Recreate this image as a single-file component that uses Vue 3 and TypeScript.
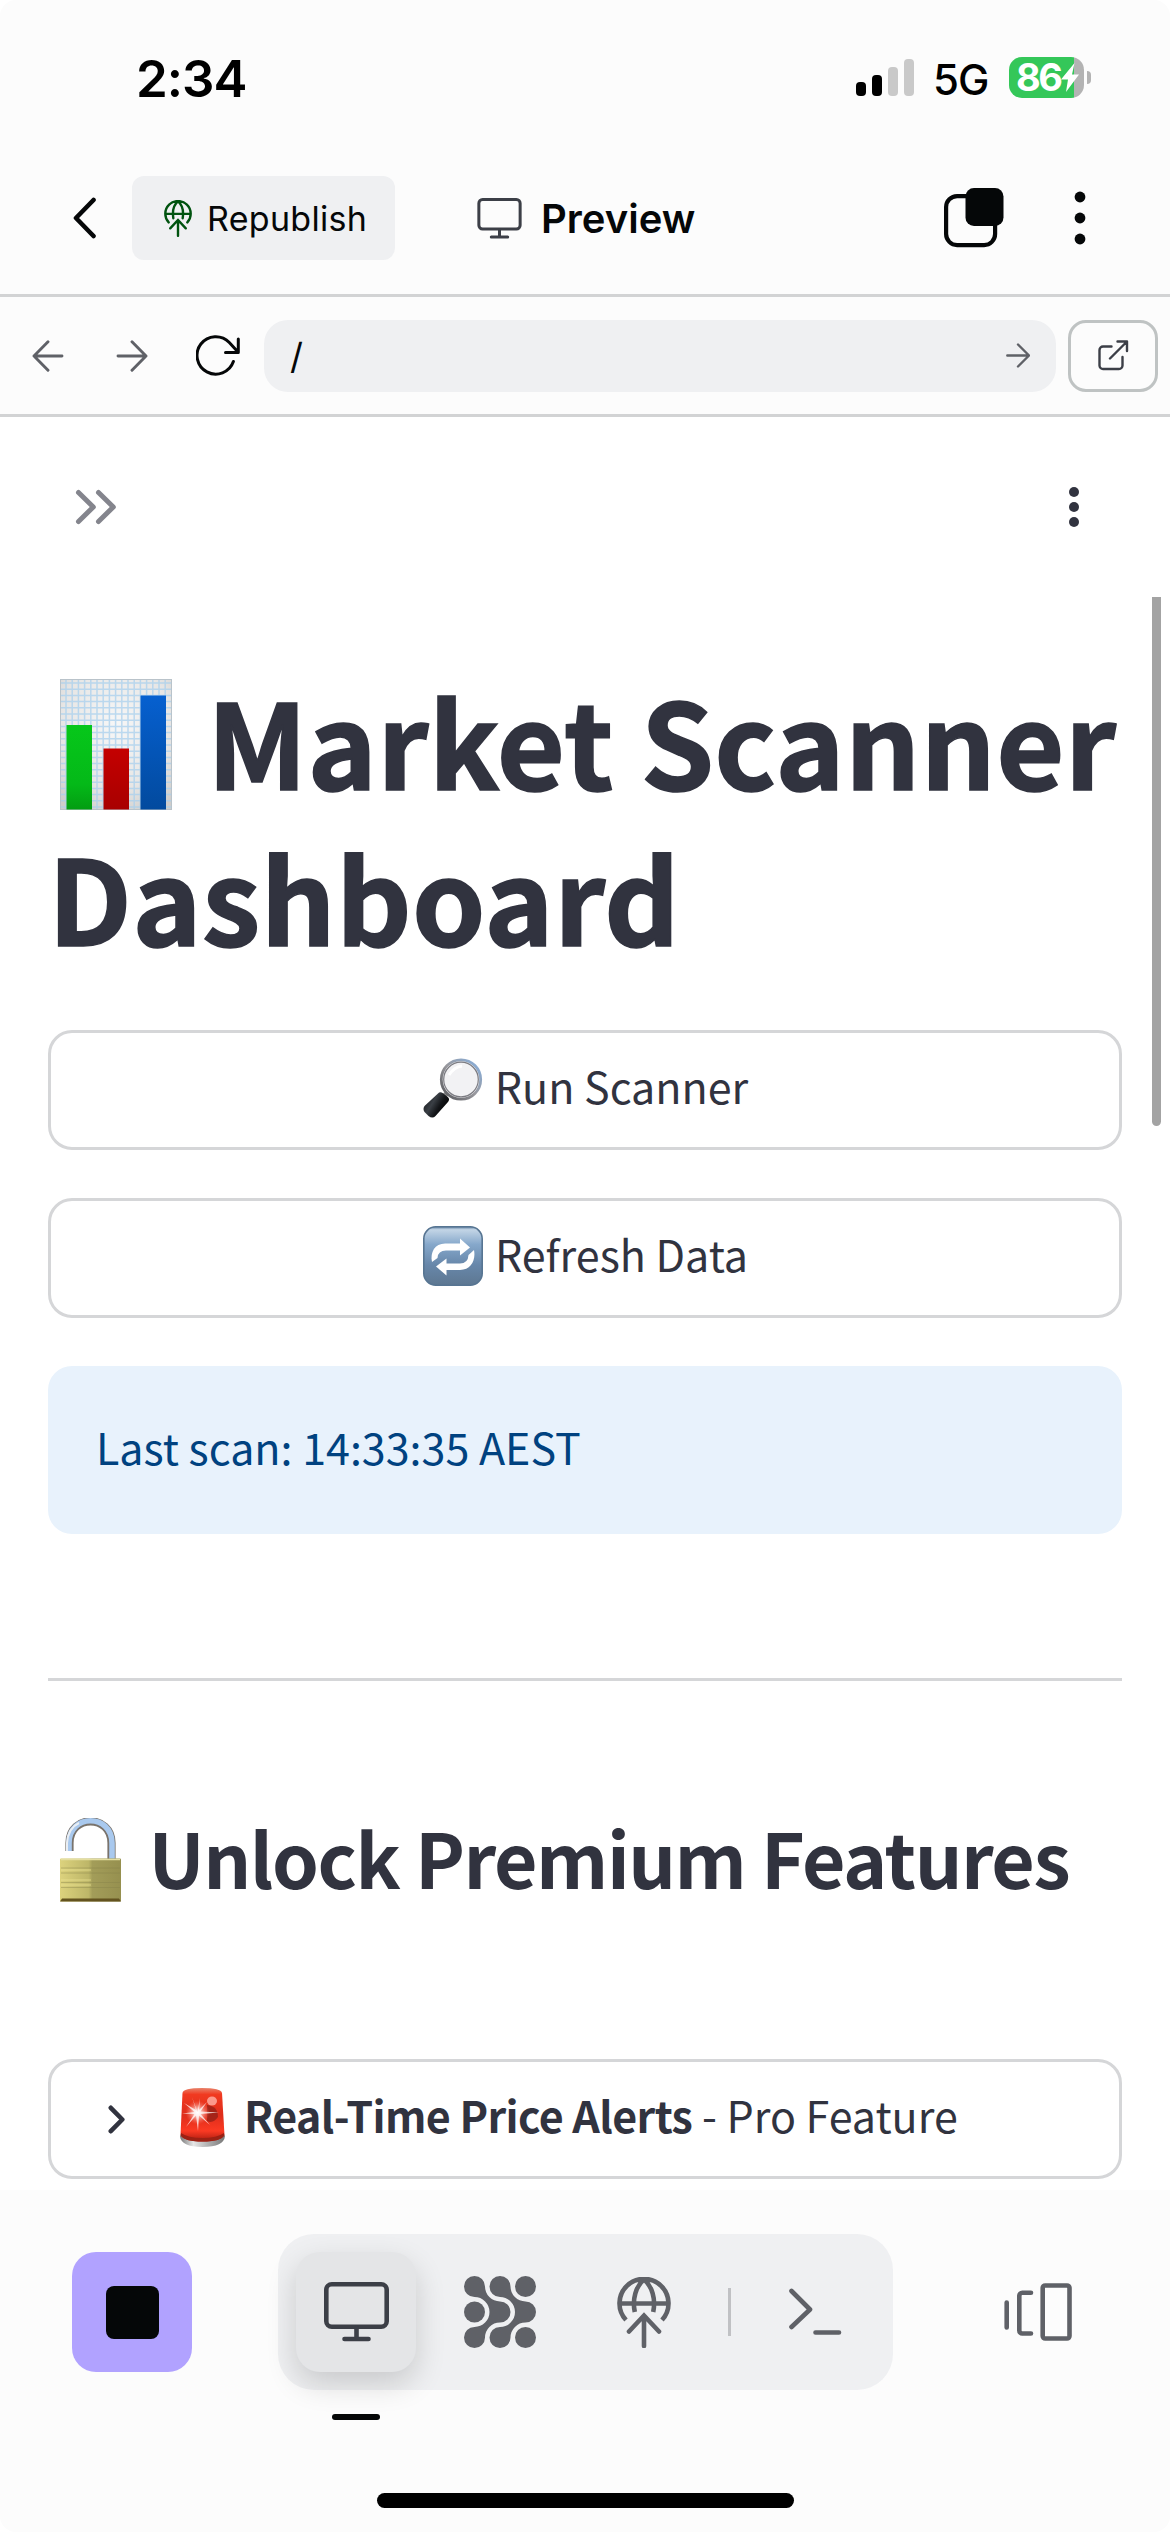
<script setup lang="ts">
interface SignalBar {
  height: number
  active: boolean
}

const signalBars: SignalBar[] = [
  { height: 14, active: true },
  { height: 21, active: true },
  { height: 29, active: false },
  { height: 37, active: false },
]

const gridX: number[] = Array.from({ length: 17 }, (_, i) => 1 + i * 6.2)
const gridY: number[] = Array.from({ length: 21 }, (_, i) => 3 + i * 6.2)
const menuDots: number[] = [6, 27, 48]
const appDots: number[] = [5, 20, 35]
</script>

<template>
  <div class="screen">
    <div class="chrome-top">
      <div class="status">
        <span class="time">2:34</span>
        <div class="signal">
          <i
            v-for="(bar, i) in signalBars"
            :key="i"
            :class="{ on: bar.active }"
            :style="{ height: bar.height + 'px' }"
          ></i>
        </div>
        <span class="network">5G</span>
        <div class="battery">
          <span class="level">86</span>
          <svg class="bolt" width="18" height="29" viewBox="0 0 18 29">
            <path d="M13.5 0 0 16.500h7L5 29 18 11.500h-7z" fill="#fff" />
          </svg>
        </div>
        <i class="battery-cap"></i>
      </div>

      <header class="header">
        <svg class="back" width="24" height="42" viewBox="0 0 24 42">
          <path d="M20.500 3 3 21l17.500 18" fill="none" stroke="#050708" stroke-width="4.600" stroke-linecap="round" stroke-linejoin="round" />
        </svg>
        <button class="republish">
          <svg width="28" height="37" viewBox="0 0 54 71" fill="none" stroke="#00530f" stroke-width="4.600" stroke-linecap="round">
            <path d="M9 43A24.500 24.500 0 1 1 45 43M2.500 26.500h49M18 35C16 22 19 9 27 2.500 35 9 38 22 36 35M27 40v29M12 54.500 27 38.500l15 16" />
          </svg>
          <span>Republish</span>
        </button>
        <svg class="title-icon" width="45" height="41" viewBox="0 0 65 60" fill="none" stroke="#3c3f47" stroke-width="4.400" stroke-linecap="round">
          <rect x="2.300" y="2.300" width="60.400" height="43" rx="5.500" />
          <path d="M32.500 46v10M20.500 57h24" />
        </svg>
        <span class="page-title">Preview</span>
        <svg class="tabs" width="60" height="60" viewBox="0 0 60 60">
          <rect x="2.100" y="8.100" width="49" height="49" rx="11" fill="none" stroke="#050708" stroke-width="4.200" />
          <rect x="21.500" y="0" width="38" height="38" rx="8.500" fill="#050708" />
        </svg>
        <svg class="more" width="12" height="54" viewBox="0 0 12 54" fill="#050708">
          <circle v-for="y in menuDots" :key="y" cx="6" :cy="y" r="5.400" />
        </svg>
      </header>

      <nav class="address-row">
        <svg class="nav-back" width="32" height="32" viewBox="0 0 32 32" fill="none" stroke="#5f6167" stroke-width="2.900" stroke-linecap="round" stroke-linejoin="round">
          <path d="M30 16H2M16 1.800 2 16l14 14.200" />
        </svg>
        <svg class="nav-forward" width="32" height="32" viewBox="0 0 32 32" fill="none" stroke="#5f6167" stroke-width="2.900" stroke-linecap="round" stroke-linejoin="round">
          <path d="M2 16h28M16 1.800 30 16 16 30.200" />
        </svg>
        <svg class="reload" width="44" height="41" viewBox="0 0 44 41" fill="none" stroke="#050708" stroke-width="3" stroke-linecap="round" stroke-linejoin="round">
          <path d="M37.400 26.500A18.700 18.700 0 1 1 33.300 7.500L42 17M42.300 4v13.500H29.500" />
        </svg>
        <div class="url">
          <span>/</span>
          <svg width="24" height="25" viewBox="0 0 24 25" fill="none" stroke="#5f6167" stroke-width="2.400" stroke-linecap="round" stroke-linejoin="round">
            <path d="M1.300 12.500h21.400M12 1.500l11 11-11 11" />
          </svg>
        </div>
        <button class="external">
          <svg width="31" height="31" viewBox="0 0 31 31" fill="none" stroke="#3c3f47" stroke-width="2.400" stroke-linecap="round" stroke-linejoin="round">
            <path d="M13.500 6.500H5a3.500 3.500 0 0 0-3.500 3.500v15.500A3.500 3.500 0 0 0 5 29h16a3.500 3.500 0 0 0 3.500-3.500v-8.500M12 18.500 29 1.500M19.500 1.500H29V11" />
          </svg>
        </button>
      </nav>
    </div>

    <main class="app">
      <i class="scrollbar"></i>
      <div class="app-toolbar">
        <svg width="42" height="36" viewBox="0 0 42 36" fill="none" stroke="#84858d" stroke-width="5" stroke-linecap="round" stroke-linejoin="round">
          <path d="M3.500 3.500 18.300 18 3.500 32.500M23.500 3.500 38.300 18 23.500 32.500" />
        </svg>
        <svg width="10" height="40" viewBox="0 0 10 40" fill="#31333f">
          <circle v-for="y in appDots" :key="y" cx="5" :cy="y" r="5" />
        </svg>
      </div>

      <h1>
        <svg class="chart" width="112" height="131" viewBox="0 0 112 131">
          <defs>
            <radialGradient id="paper" cx=".5" cy=".35" r=".75">
              <stop offset="0" stop-color="#f7f7f7" />
              <stop offset=".65" stop-color="#e7e6e5" />
              <stop offset="1" stop-color="#cfcdcb" />
            </radialGradient>
            <linearGradient id="green" x2="0" y2="1">
              <stop offset="0" stop-color="#06c71a" /><stop offset=".7" stop-color="#04b918" /><stop offset="1" stop-color="#039d12" />
            </linearGradient>
            <linearGradient id="red" x2="0" y2="1">
              <stop offset="0" stop-color="#c40000" /><stop offset="1" stop-color="#a80000" />
            </linearGradient>
            <linearGradient id="blue" x2="0" y2="1">
              <stop offset="0" stop-color="#0660d0" /><stop offset="1" stop-color="#024a9e" />
            </linearGradient>
          </defs>
          <rect width="112" height="131" fill="url(#paper)" />
          <g stroke="#a9d0ee" stroke-width="1.500" opacity=".75">
            <line v-for="x in gridX" :key="'x' + x" :x1="x + 5" :x2="x + 5" y1="0" y2="131" />
            <line v-for="y in gridY" :key="'y' + y" :y1="y + 1" :y2="y + 1" x1="0" x2="112" />
          </g>
          <rect x=".500" y=".500" width="111" height="130" fill="none" stroke="#b9c3ca" />
          <rect x="6.500" y="46" width="25.500" height="84.500" fill="url(#green)" />
          <rect x="43.500" y="69.500" width="25.500" height="61" fill="url(#red)" />
          <rect x="80.500" y="16.500" width="25.500" height="114" fill="url(#blue)" />
        </svg>
        Market Scanner Dashboard
      </h1>

      <button class="action first">
        <svg width="60" height="60" viewBox="0 0 60 60">
          <defs>
            <linearGradient id="rim" x1="0" y1="1" x2="1" y2="0">
              <stop offset="0" stop-color="#55565a" /><stop offset=".5" stop-color="#99999e" /><stop offset="1" stop-color="#86b1e2" />
            </linearGradient>
            <linearGradient id="handle" x1="0" y1="0" x2="1" y2=".6">
              <stop offset="0" stop-color="#0b0c0e" /><stop offset=".45" stop-color="#3a3f45" /><stop offset=".7" stop-color="#131518" /><stop offset="1" stop-color="#000" />
            </linearGradient>
          </defs>
          <path d="M20 39.500l5-5.500" stroke="#8b8b8b" stroke-width="5" />
          <path d="M15 35.500q2-2.500 5-.200l5 4q2 2 .200 4.500L12.500 58q-3 3-7 0l-4-4q-2-3 0-6z" fill="url(#handle)" />
          <circle cx="38" cy="21.500" r="19.700" fill="#f2f2f4" stroke="url(#rim)" stroke-width="2.800" />
          <circle cx="38" cy="21.500" r="17.300" fill="none" stroke="#7c7c82" stroke-width="1.200" />
          <path d="M26 17q5-8 13-9" stroke="#fff" stroke-width="3" fill="none" />
        </svg>
        <span>Run Scanner</span>
      </button>

      <button class="action">
        <svg width="60" height="60" viewBox="0 0 60 60">
          <defs>
            <linearGradient id="tile" x2="0" y2="1">
              <stop offset="0" stop-color="#6484a5" /><stop offset=".05" stop-color="#c3d5e6" /><stop offset=".3" stop-color="#86a8cb" /><stop offset=".65" stop-color="#6787aa" /><stop offset="1" stop-color="#5d7791" />
            </linearGradient>
          </defs>
          <rect x=".800" y=".800" width="58.400" height="58.400" rx="12" fill="url(#tile)" stroke="#577592" stroke-width="1.600" />
          <g fill="#fff" stroke="none">
            <path d="M9 36C7 26 12 17 23 17.500H37V12.500L47 21.500 37 29.500V24.500H23Q15 24.500 14.500 32z" />
            <path d="M51 24C53 34 48 44 37 44H23.500V49.500L13 40.500 23.500 32.500V37.500H37Q45 37.500 45.500 29z" />
          </g>
        </svg>
        <span>Refresh Data</span>
      </button>

      <div class="info">Last scan: 14:33:35 AEST</div>
      <hr />

      <h2>
        <svg class="lock" width="61" height="84" viewBox="0 0 61 84">
          <defs>
            <linearGradient id="brass" x2="1">
              <stop offset="0" stop-color="#dcd27d" /><stop offset=".47" stop-color="#bdb668" /><stop offset=".53" stop-color="#a39d59" /><stop offset="1" stop-color="#96904f" />
            </linearGradient>
          </defs>
          <path d="M9.500 33V25C9.500-3.800 51.500-3.800 51.500 25V41" fill="none" stroke="#79736c" stroke-width="8.200" />
          <path d="M9 33V25C9-4.600 52-4.600 52 25V41" fill="none" stroke="#a9c9ee" stroke-width="5.600" />
          <path d="M7 33V25Q8 10 19 5" fill="none" stroke="#e9eef3" stroke-width="2" />
          <rect x="0" y="40.500" width="61" height="43" rx="1" fill="url(#brass)" />
          <path d="M1 41.500h59" stroke="#e4dea0" stroke-width="1.500" />
          <path d="M1 50h59M1 55h59M1 64.500h59M1 69.500h59" stroke="#87814a" stroke-width=".800" opacity=".5" />
          <path d="M1 52h30M1 62h30M1 67h30" stroke="#eee695" stroke-width="1" opacity=".7" />
          <path d="M0 83.500 2 80.500H59L61 83.500z" fill="#63531f" />
        </svg>
        Unlock Premium Features
      </h2>

      <div class="expander">
        <svg class="caret" width="18" height="29" viewBox="0 0 18 29" fill="none" stroke="#31333f" stroke-width="4.600" stroke-linecap="round" stroke-linejoin="round">
          <path d="M2.800 2.800 14.300 14.500 2.800 26.200" />
        </svg>
        <svg class="siren" width="45" height="59" viewBox="0 0 45 59">
          <defs>
            <linearGradient id="dome" x2="0" y2="1">
              <stop offset="0" stop-color="#e8836b" /><stop offset=".12" stop-color="#f13a20" /><stop offset=".5" stop-color="#de2d1b" /><stop offset=".8" stop-color="#fb3a23" /><stop offset="1" stop-color="#a91b10" />
            </linearGradient>
            <linearGradient id="base" x2="1">
              <stop offset="0" stop-color="#777" /><stop offset=".3" stop-color="#e6e6e6" /><stop offset=".6" stop-color="#b4b4b4" /><stop offset="1" stop-color="#777" />
            </linearGradient>
            <radialGradient id="flare">
              <stop offset="0" stop-color="#fff" /><stop offset=".3" stop-color="#ffd9d3" stop-opacity=".85" /><stop offset="1" stop-color="#ff8070" stop-opacity="0" />
            </radialGradient>
          </defs>
          <path d="M0 48Q1 59 22.500 59T45 48L43 44H2z" fill="url(#base)" />
          <path d="M2.500 5Q3 0 22 0T42 5L44.500 47Q41 53.500 22.500 53.500T.500 47z" fill="url(#dome)" />
          <path d="M1 45Q8 50 22.500 50T44 45V48Q40 53.500 22.500 53.500T1 48z" fill="#9c2114" />
          <path d="M27 17Q38 18 38 29 33 36 27 33z" fill="#8c1f17" opacity=".7" />
          <ellipse cx="32" cy="13" rx="5" ry="4.500" fill="#ffb3a7" opacity=".8" />
          <circle cx="17.500" cy="24.500" r="12" fill="url(#flare)" />
          <path d="M17.500 24.500 12 9 16 22 4 15 14.500 24 2 25.500 14.500 26 6 39 16 27.500 18 43 19 27.500 30 37 20.500 26 39 24.500 20.500 23.500 27 14 19 22 20 10z" fill="#fff" opacity=".75" />
        </svg>
        <span class="label"><strong>Real-Time Price Alerts</strong><span> - Pro Feature</span></span>
      </div>
    </main>

    <footer class="dock">
      <div class="dock-row">
        <button class="stop"><i></i></button>
        <div class="pill">
          <button class="tab active">
            <svg width="65" height="60" viewBox="0 0 65 60" fill="none" stroke="#3c3f47" stroke-width="4.600" stroke-linecap="round">
              <rect x="2.300" y="2.300" width="60.400" height="42.500" rx="5.500" />
              <path d="M32.500 46v10M20.500 57h24" />
            </svg>
            <i class="marker"></i>
          </button>
          <svg class="agent" width="72" height="72" viewBox="0 0 72 72" fill="#5f6167">
            <path d="M21 10.500A15 15 0 0 0 36 25.500A10.500 10.500 0 0 1 36 46.500A15 15 0 0 0 21 61.500A10.500 10.500 0 1 1 10.500 51A15 15 0 0 0 10.500 21A10.500 10.500 0 1 1 21 10.500Z" />
            <path transform="translate(25.500)" d="M21 10.500A15 15 0 0 0 36 25.500A10.500 10.500 0 0 1 36 46.500A15 15 0 0 0 21 61.500A10.500 10.500 0 1 1 10.500 51A15 15 0 0 0 10.500 21A10.500 10.500 0 1 1 21 10.500Z" />
            <circle cx="61.500" cy="10.500" r="10.500" />
            <circle cx="10.500" cy="36" r="10.500" />
            <circle cx="61.500" cy="61.500" r="10.500" />
          </svg>
          <svg class="globe" width="54" height="71" viewBox="0 0 54 71" fill="none" stroke="#5f6167" stroke-width="4.600">
            <path d="M9 43A24.500 24.500 0 1 1 45 43M2.500 26.500h49M17.800 35C15 22 19 9 27 2.500 35 9 39 22 36.200 35" />
            <path d="M27 40v29M12 54.500 27 38.500l15 16" stroke-linecap="round" />
          </svg>
          <i class="split"></i>
          <svg class="shell" width="53" height="48" viewBox="0 0 53 48" fill="none" stroke="#5f6167" stroke-width="4.600" stroke-linecap="round" stroke-linejoin="round">
            <path d="M2.500 3 21 21.500 2.500 39M26.500 44.500h23.500" />
          </svg>
        </div>
        <svg class="panels" width="68" height="60" viewBox="0 0 68 60" fill="none" stroke="#5f6167" stroke-width="4.600" stroke-linecap="round" stroke-linejoin="round">
          <path d="M2.700 20.500v25M27 10.800H18.300a3 3 0 0 0-3 3v34.700a3 3 0 0 0 3 3H27" />
          <rect x="38.700" y="3.500" width="26.800" height="53" rx="2.500" />
        </svg>
      </div>
      <i class="home-indicator"></i>
    </footer>
  </div>
</template>

<style>
body {
  margin: 0;
  background: #fff;
}
</style>

<style scoped>
.screen {
  width: 1170px;
  height: 2532px;
  display: flex;
  flex-direction: column;
  overflow: hidden;
  background: #fff;
  font-family: "Noto Sans CJK JP", "Noto Sans", sans-serif;
  color: #31333f;
}
.screen * {
  box-sizing: border-box;
}
svg {
  display: block;
  flex: none;
}
i {
  display: block;
  flex: none;
}
button {
  padding: 0;
  border: 0;
  background: none;
  font: inherit;
  color: inherit;
}

.chrome-top {
  background: #fcfcfc;
  border-radius: 16px 16px 0 0;
  height: 417px;
  flex: none;
}
.status {
  height: 155px;
  padding-left: 136px;
  display: flex;
  align-items: center;
  font-family: Inter, sans-serif;
  color: #000;
}
.time {
  width: 720px;
  font-size: 51px;
  font-weight: 600;
  line-height: 60px;
  letter-spacing: -1px;
  padding-top: 2px;
}
.signal {
  width: 58px;
  height: 37px;
  display: flex;
  gap: 6px;
  align-items: flex-end;
}
.signal i {
  width: 10px;
  border-radius: 4px;
  background: #c9c9c9;
}
.signal i.on {
  background: #000;
}
.network {
  width: 75px;
  margin-left: 19px;
  margin-right: 1px;
  font-size: 42px;
  font-weight: 500;
  line-height: 50px;
  letter-spacing: -1px;
  padding-top: 4px;
}
.battery {
  width: 75px;
  height: 41px;
  border-radius: 13px;
  background: linear-gradient(90deg, #34c759 65px, #b3b3b3 65px);
  display: flex;
  align-items: center;
  padding-left: 7px;
  color: #fff;
}
.level {
  width: 45px;
  font-size: 38px;
  font-weight: 700;
  line-height: 41px;
  letter-spacing: -2.4px;
}
.battery-cap {
  width: 4px;
  height: 13px;
  margin-left: 3px;
  border-radius: 0 4px 4px 0;
  background: #b3b3b3;
}

.header {
  height: 142px;
  padding-bottom: 13px;
  border-bottom: 3px solid #d2d3d4;
  display: flex;
  align-items: center;
  padding-left: 73px;
  font-family: Inter, sans-serif;
  color: #050708;
}
.republish {
  width: 263px;
  height: 84px;
  margin-left: 35px;
  padding-left: 32px;
  border-radius: 12px;
  background: #eff0f2;
  display: flex;
  align-items: center;
  font-size: 34px;
}
.republish span {
  margin-left: 15px;
  letter-spacing: 0.3px;
}
.title-icon {
  margin-left: 82px;
}
.page-title {
  width: 403px;
  margin-left: 19px;
  font-size: 40px;
  font-weight: 600;
}
.more {
  margin-left: 70px;
}

.address-row {
  height: 120px;
  border-bottom: 3px solid #d2d3d4;
  display: flex;
  align-items: center;
  padding-left: 32px;
}
.nav-forward {
  margin-left: 52px;
}
.reload {
  margin-left: 48px;
}
.url {
  width: 792px;
  height: 72px;
  margin-left: 24px;
  padding: 0 26px;
  border-radius: 24px;
  background: #eff0f2;
  display: flex;
  align-items: center;
  justify-content: space-between;
  font-family: Inter, sans-serif;
  font-size: 36px;
  color: #050708;
}
.external {
  width: 90px;
  height: 72px;
  margin-left: 12px;
  border: 3px solid #bfc3c3;
  border-radius: 18px;
  display: flex;
  align-items: center;
  justify-content: center;
}

.app {
  position: relative;
  height: 1773px;
  flex: none;
  padding: 73px 48px 0;
  background: #fff;
  display: flex;
  flex-direction: column;
}
.scrollbar {
  position: absolute;
  top: 180px;
  right: 9px;
  width: 9px;
  height: 529px;
  border-radius: 0 0 5px 5px;
  background: #a3a3a3;
}
.app-toolbar {
  height: 34px;
  padding: 0 43px 0 27px;
  display: flex;
  align-items: center;
  justify-content: space-between;
}
h1 {
  width: 1110px;
  height: 312px;
  margin: 137px 0 57px;
  font-size: 117.500px;
  font-weight: 700;
  line-height: 156px;
  letter-spacing: 0.32px;
  -webkit-text-stroke: 1.6px #31333f;
}
.chart {
  display: inline-block;
  vertical-align: -20px;
  margin: 0 8px 0 12px;
}
.action {
  height: 120px;
  margin-bottom: 48px;
  padding-left: 1px;
  border: 3px solid #d5d6d8;
  border-radius: 24px;
  display: flex;
  align-items: center;
  justify-content: center;
  font-size: 43px;
}
.action svg {
  margin: 0 12px 5px 0;
}
.action span {
  line-height: 60px;
  padding-bottom: 10px;
}
.info {
  height: 168px;
  padding: 44px 48px;
  border-radius: 24px;
  background: #e8f2fc;
  color: #004280;
  font-size: 43px;
  line-height: 72px;
}
hr {
  width: 100%;
  height: 3px;
  margin: 144px 0 126px;
  border: 0;
  background: #d5d6d8;
}
h2 {
  height: 100px;
  margin: 0 0 152px;
  font-size: 75px;
  font-weight: 600;
  line-height: 100px;
  letter-spacing: -1.45px;
  white-space: nowrap;
}
.lock {
  display: inline-block;
  vertical-align: -13px;
  margin: 0 12px 0 12px;
}
.expander {
  height: 120px;
  border: 3px solid #d5d6d8;
  border-radius: 24px;
  display: flex;
  align-items: center;
  padding-left: 57px;
  font-size: 43px;
  white-space: pre;
}
.siren {
  margin: 0 19px 4px 54px;
}
.label {
  line-height: 60px;
  padding-bottom: 10px;
}
.label strong {
  font-weight: 600;
  letter-spacing: -0.62px;
}

.dock {
  height: 342px;
  flex: none;
  background: #fcfcfc;
  border-radius: 0 0 16px 16px;
  padding-top: 44px;
}
.dock-row {
  height: 156px;
  padding-left: 72px;
  display: flex;
  align-items: center;
}
.stop {
  width: 120px;
  height: 120px;
  border-radius: 24px;
  background: #b1a2ff;
  display: flex;
  align-items: center;
  justify-content: center;
}
.stop i {
  width: 53px;
  height: 53px;
  border-radius: 8px;
  background: #050708;
}
.pill {
  width: 615px;
  height: 156px;
  margin-left: 86px;
  padding-left: 18px;
  border-radius: 36px;
  background: #eff0f2;
  display: flex;
  align-items: center;
}
.tab {
  position: relative;
  width: 120px;
  height: 120px;
  border-radius: 24px;
  background: #e4e5e7;
  box-shadow: 0 12px 30px rgba(0, 0, 0, 0.16);
  display: flex;
  align-items: center;
  justify-content: center;
}
.marker {
  position: absolute;
  left: 36px;
  top: 162px;
  width: 48px;
  height: 6px;
  border-radius: 3px;
  background: #050708;
}
.agent {
  margin-left: 48px;
}
.globe {
  margin-left: 81px;
}
.split {
  width: 3px;
  height: 48px;
  margin-left: 57px;
  background: #c0c1c4;
}
.shell {
  margin-left: 58px;
}
.panels {
  margin-left: 111px;
}
.home-indicator {
  width: 417px;
  height: 15px;
  margin: 103px auto 0;
  border-radius: 8px;
  background: #000;
}
</style>
